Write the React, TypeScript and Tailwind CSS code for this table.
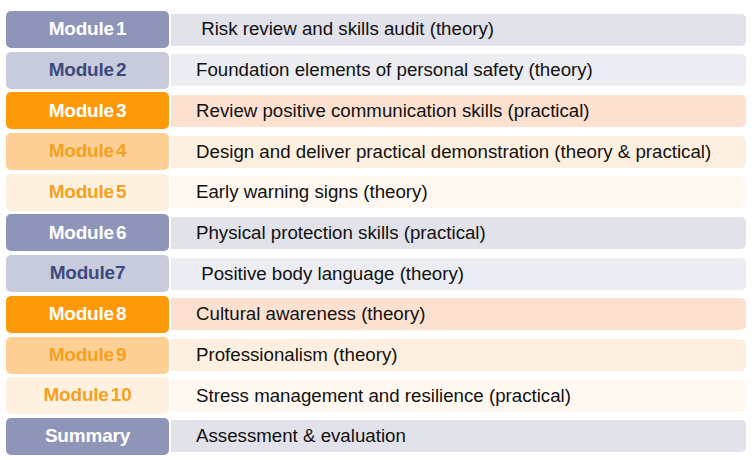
const styles = [
  { left: 'bg-[#8f95b9] text-white', right: 'bg-[#e1e2ea]' },
  { left: 'bg-[#c7cbdc] text-[#3d4a7e]', right: 'bg-[#ecedf2]' },
  { left: 'bg-[#fe9a0a] text-white', right: 'bg-[#fde1d0]' },
  { left: 'bg-[#fed095] text-[#f6a020]', right: 'bg-[#fef0e0]' },
  { left: 'bg-[#fff1e0] text-[#f6a020]', right: 'bg-[#fff8f1]' },
];

const rows = [
  { label: 'Module 1', text: '\u00a0Risk review and skills audit (theory)' },
  { label: 'Module 2', text: 'Foundation elements of personal safety (theory)' },
  { label: 'Module 3', text: 'Review positive communication skills (practical)' },
  { label: 'Module 4', text: 'Design and deliver practical demonstration (theory & practical)' },
  { label: 'Module 5', text: 'Early warning signs (theory)' },
  { label: 'Module 6', text: 'Physical protection skills (practical)' },
  { label: 'Module7', text: '\u00a0Positive body language (theory)' },
  { label: 'Module 8', text: 'Cultural awareness (theory)' },
  { label: 'Module 9', text: 'Professionalism (theory)' },
  { label: 'Module 10', text: 'Stress management and resilience (practical)' },
  { label: 'Summary', text: 'Assessment & evaluation' },
];

export default function App() {
  return (
    <div className="w-[752px] h-[460px] bg-white pt-[11px] px-[6px] flex flex-col gap-[3.7px] font-['Liberation_Sans',Arial,sans-serif]">
      {rows.map((row, i) => {
        const s = styles[i % 5];
        return (
          <div key={row.label} className="flex items-center h-[37px]">
            <div
              className={`w-[163px] h-[37px] shrink-0 rounded-[5px] flex items-center justify-center text-[19px] font-bold tracking-[-0.2px] [word-spacing:-3px] ${s.left}`}
            >
              {row.label}
            </div>
            <div
              className={`ml-[2px] flex-1 h-[32px] rounded-r-[5px] flex items-center pl-[25px] text-[18.7px] text-[#111] ${s.right}`}
            >
              {row.text}
            </div>
          </div>
        );
      })}
    </div>
  );
}
